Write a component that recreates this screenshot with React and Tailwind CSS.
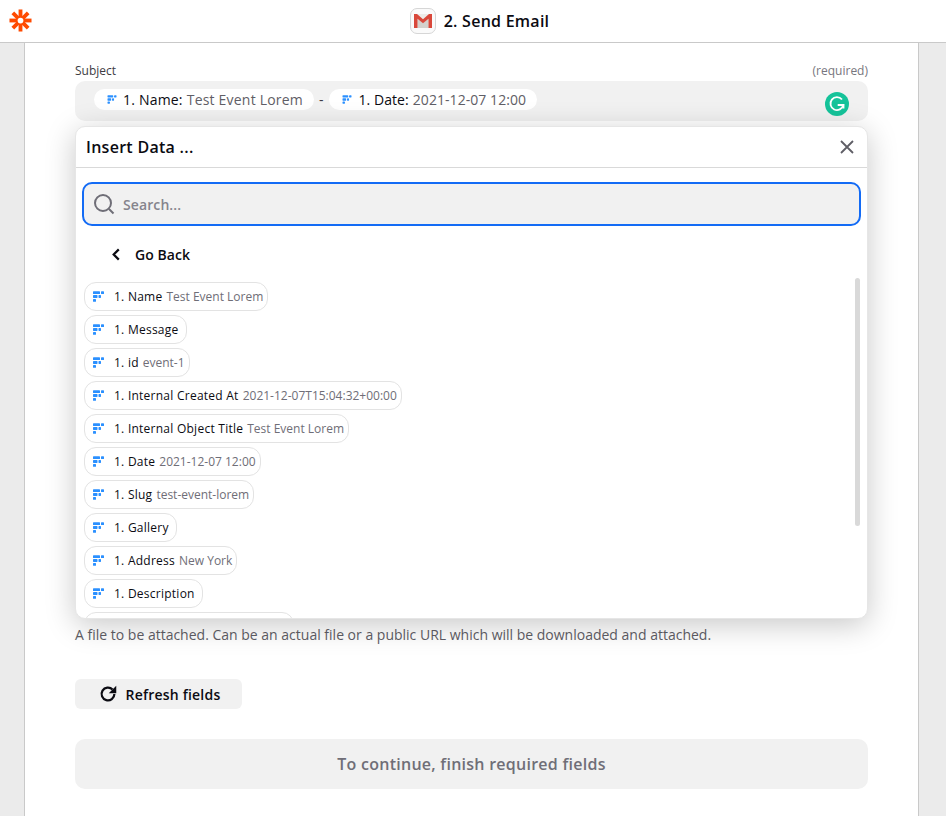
import React from "react";

const font = { fontFamily: '"Open Sans", sans-serif' };

function FieldIcon({ className = "" }) {
  return (
    <svg viewBox="0 0 11 11" className={className} fill="#2b90ff" aria-hidden="true">
      <rect x="0" y="0.200" width="7" height="2.800" rx="0.600" />
      <rect x="8" y="0.200" width="3" height="2.800" rx="0.600" />
      <rect x="0" y="4.100" width="4.500" height="2.800" rx="0.600" />
      <rect x="5.500" y="4.100" width="2.500" height="2.800" rx="0.600" />
      <rect x="0" y="8" width="3" height="2.800" rx="0.600" />
    </svg>
  );
}

function TokenPill({ label, value, tracking }) {
  return (
    <span className={`flex h-[21px] items-center rounded-full bg-white pl-[13px] pr-[11px] text-[14px] leading-none ${tracking}`}>
      <FieldIcon className="mr-[6px] h-[9px] w-[10px]" />
      <span className="font-medium text-[#0b0b12]">{label}</span>
      <span className="ml-[4px] text-[#5f5e66]">{value}</span>
    </span>
  );
}

function Chip({ label, value, fixed }) {
  return (
    <div
      className={`flex h-[29px] shrink-0 items-center whitespace-nowrap rounded-[12px] border border-[#e3e3e3] bg-white pl-[8px] pr-[4px] text-[12px] ${fixed ? "w-[210px]" : "w-fit"}`}
    >
      {label && <FieldIcon className="mr-[10px] h-[11px] w-[11px]" />}
      {label && (
        <span className={`font-medium tracking-[0.25px] text-[#0b0b12] ${value ? "" : "pr-[3px]"}`}>{label}</span>
      )}
      {value && <span className="ml-[4px] text-[#6f6e77]">{value}</span>}
    </div>
  );
}

const chips = [
  ["1. Name", "Test Event Lorem"],
  ["1. Message", ""],
  ["1. id", "event-1"],
  ["1. Internal Created At", "2021-12-07T15:04:32+00:00"],
  ["1. Internal Object Title", "Test Event Lorem"],
  ["1. Date", "2021-12-07 12:00"],
  ["1. Slug", "test-event-lorem"],
  ["1. Gallery", ""],
  ["1. Address", "New York"],
  ["1. Description", ""],
];

function Logo() {
  return (
    <svg viewBox="0 0 24 24" className="h-[23px] w-[23px]" aria-hidden="true">
      <g stroke="#ff4a00" strokeWidth="4">
        <line x1="12" y1="0.500" x2="12" y2="23.500" />
        <line x1="0.500" y1="12" x2="23.500" y2="12" />
        <line x1="4" y1="4" x2="20" y2="20" />
        <line x1="20" y1="4" x2="4" y2="20" />
      </g>
      <circle cx="12" cy="12" r="3" fill="#fff" />
    </svg>
  );
}

function Gmail() {
  return (
    <svg viewBox="0 0 18 14" className="h-[14px] w-[18px]" aria-hidden="true">
      <rect x="0" y="0" width="18" height="14" fill="#ecebe8" />
      <path d="M3.500 14V4.500L9 9l5.500-4.500V14Z" fill="#d4d1cc" />
      <path d="M0 0h3l6 5.200L15 0h3v14h-3.500V4.800L9 9.200 3.500 4.800V14H0Z" fill="#d9483b" />
    </svg>
  );
}

export default function App() {
  return (
    <div className="relative flex h-[816px] w-[946px] flex-col overflow-hidden bg-[#ebebeb]" style={font}>
      <header className="flex h-[43px] shrink-0 items-center justify-center border-b border-[#c9c9c9] bg-white pl-[13px]">
        <div className="absolute left-[9px] top-[9px]">
          <Logo />
        </div>
        <div className="flex items-center">
          <span className="mr-[8px] flex h-[26px] w-[26px] items-center justify-center rounded-[7px] border border-[#d6d6d6] bg-[#fafafa]">
            <Gmail />
          </span>
          <span className="text-[16px] font-semibold tracking-[0.25px] text-[#0b0b12]">2. Send Email</span>
        </div>
      </header>

      <main className="relative ml-[24px] mr-[27px] flex-1 border-x border-[#c9c9c9] bg-white px-[50px]">
        <div className="flex h-[38px] items-end justify-between pb-[2px] text-[12px] leading-[16px]">
          <span className="text-[#3d3c43]">Subject</span>
          <span className="text-[#77767e]">(required)</span>
        </div>

        <div className="relative flex h-[40px] items-start rounded-[10px] bg-[#f1f1f1] pl-[19px] pt-[8px]">
          <TokenPill label="1. Name:" value="Test Event Lorem" tracking="tracking-[0.2px]" />
          <span className="ml-[5px] mr-[6px] text-[14px] leading-[21px] text-[#3d3c43]">-</span>
          <TokenPill label="1. Date:" value="2021-12-07 12:00" tracking="tracking-[0.06px]" />
          <svg viewBox="0 0 24 24" className="absolute left-[750px] top-[11px] h-[24px] w-[24px]" aria-hidden="true">
            <circle cx="12" cy="12" r="12" fill="#15c39a" />
            <path d="M17 7.500A6.500 6.500 0 1 0 18.300 13H12.700" fill="none" stroke="#fff" strokeWidth="1.800" />
            <path d="M18.500 12.500v4" fill="none" stroke="#fff" strokeWidth="1.800" />
          </svg>
        </div>

        <div className="mt-[504px] text-[14px] leading-[20px] text-[#5f5e66]">
          A file to be attached. Can be an actual file or a public URL which will be downloaded and attached.
        </div>

        <button className="mt-[34px] flex h-[30px] w-[167px] items-center justify-center rounded-[6px] bg-[#f1f1f1] pl-[2px] text-[14px] font-semibold tracking-[0.2px] text-[#0b0b12]">
          <svg viewBox="0 0 24 24" className="mr-[9px] h-[18px] w-[18px]" fill="none" stroke="#0b0b12" strokeWidth="3" aria-hidden="true">
            <path d="M20.500 12a8.500 8.500 0 1 1-2.400-6" />
            <path d="M23 1v10H13Z" fill="#0b0b12" stroke="none" />
          </svg>
          Refresh fields
        </button>

        <div className="mt-[30px] flex h-[50px] items-center justify-center rounded-[10px] bg-[#f1f1f1] text-[16px] font-semibold tracking-[0.26px] text-[#6f6e77]">
          To continue, finish required fields
        </div>

        <section className="absolute left-[50px] top-[83px] flex h-[493px] w-[793px] flex-col overflow-hidden rounded-[10px] border border-[#e6e6e6] bg-white shadow-[0_6px_30px_rgba(0,0,0,0.22)]">
          <div className="flex h-[41px] shrink-0 items-center justify-between border-b border-[#d9d9d9] pl-[10px] pr-[12px]">
            <span className="text-[16px] font-semibold tracking-[0.28px] text-[#0b0b12]">Insert Data ...</span>
            <svg viewBox="0 0 16 16" className="h-[16px] w-[16px]" fill="none" stroke="#5f5e66" strokeWidth="1.800" aria-hidden="true">
              <path d="M2 2l12 12M14 2 2 14" />
            </svg>
          </div>

          <div className="mx-[6px] mt-[14px] flex h-[44px] shrink-0 items-center rounded-[10px] border-2 border-[#136bf5] bg-[#f1f1f1] pl-[9px]">
            <svg viewBox="0 0 22 22" className="h-[22px] w-[22px]" fill="none" stroke="#6f6e77" strokeWidth="2" aria-hidden="true">
              <circle cx="10" cy="10" r="8" />
              <path d="M16 16l4.500 4.500" />
            </svg>
            <span className="ml-[8px] text-[14px] font-semibold tracking-[0.1px] text-[#85848c]">Search...</span>
          </div>

          <div className="flex h-[52px] shrink-0 items-center pl-[35px] pt-[4px]">
            <svg viewBox="0 0 10 14" className="mr-[14px] h-[13px] w-[10px]" fill="none" stroke="#0b0b12" strokeWidth="2.400" aria-hidden="true">
              <path d="M8 1.500 2.500 7 8 12.500" />
            </svg>
            <span className="text-[14px] font-semibold tracking-[0.05px] text-[#0b0b12]">Go Back</span>
          </div>

          <div className="relative min-h-0 flex-1 overflow-hidden pt-[4px]">
            <div className="flex flex-col gap-[4px] pl-[8px]">
              {chips.map(([label, value]) => (
                <Chip key={label} label={label} value={value} />
              ))}
              <Chip fixed />
            </div>
            <div className="absolute left-[779px] top-0 h-[248px] w-[5px] rounded-full bg-[#d9d9d9]" />
          </div>
        </section>
      </main>
    </div>
  );
}
